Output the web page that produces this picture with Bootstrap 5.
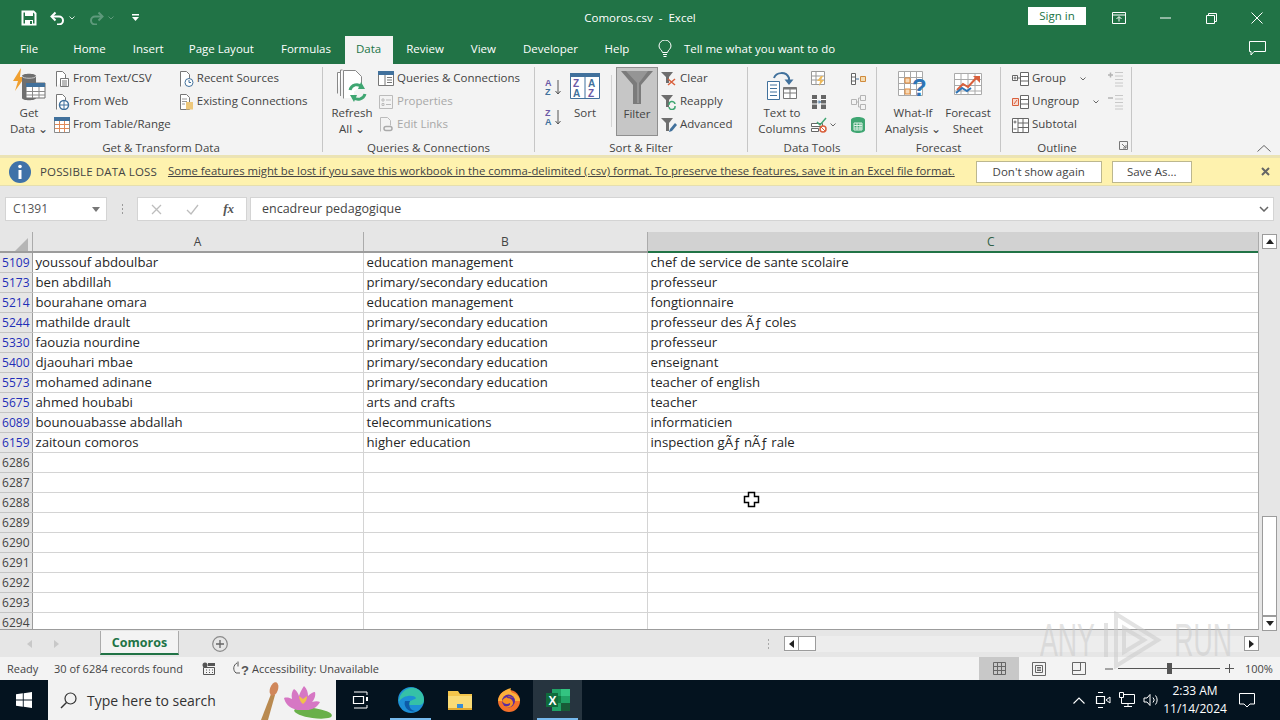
<!DOCTYPE html>
<html lang="en">
  <head>
    <meta charset="UTF-8" />
    <title>Comoros.csv - Excel</title>
    <link href="https://cdn.jsdelivr.net/npm/bootstrap@5.3.3/dist/css/bootstrap.min.css" rel="stylesheet" />
    <style>
      html, body { width: 1280px; height: 720px; overflow: hidden; }
      body { font-family: "Open Sans", "Liberation Sans", sans-serif; font-size: 11.5px; color: #444; background: #e6e6e6; position: relative; }
      svg { display: block; flex: none; }

      .title-bar { height: 36px; background: #217346; color: #fff; }
      .title-side { flex: 1 1 0; }
      .title-name { font-size: 11.5px; margin-bottom: 1px; }
      .qat-save { margin-left: 21px; }
      .qat-undo { margin-left: 13px; }
      .qat-caret { margin: 0 0 0 4px; }
      .qat-redo { margin-left: 14px; }
      .qat-more { margin-left: 18px; }
      .signin-btn { width: 58px; height: 18px; background: #fff; color: #217346; font-size: 11.5px; line-height: 18px; text-align: center; margin: 0 10px 4px 0; }
      .win-btn { width: 46px; }
      .tab-bar { height: 28px; background: #217346; color: #fff; }
      .tab-item { padding: 0 13.5px; line-height: 25px; white-space: nowrap; }
      .tab-file { padding: 0 21.5px 0 20px; }
      .tab-ins { padding-right: 11.5px; }
      .tab-on { background: #f3f3f3; color: #217346; padding: 0 11.5px; }
      .tab-dev { padding-right: 13px; }
      .tell-me { margin-left: 15px; gap: 12px; padding-bottom: 3px; }
      .comment-btn { margin: 0 14px 3px auto; align-self: center; }

      .ribbon { height: 91px; background: #f3f3f3; padding-top: 3px; }
      .rb-group { flex: none; position: relative; height: 85px; border-right: 1px solid #c6c6c6; }
      .rb-body { height: 73px; display: flex; }
      .rb-label { height: 16px; line-height: 15px; text-align: center; white-space: nowrap; }
      .rb-g1 { width: 323px; }
      .rb-g2 { width: 212px; }
      .rb-g3 { width: 213px; }
      .rb-g4 { width: 129px; }
      .rb-g5 { width: 124px; }
      .rb-g6 { width: 131px; }
      .rb-big { width: 42px; flex: none; display: flex; flex-direction: column; align-items: center; text-align: center; line-height: 15.5px; white-space: nowrap; }
      .rb-icon { height: 38px; display: flex; align-items: center; justify-content: center; }
      .rb-col { display: flex; flex-direction: column; flex: none; }
      .rb-item { height: 23px; display: flex; align-items: center; gap: 3px; white-space: nowrap; flex: none; }
      .rb-item > span { margin-top: -2px; }
      .rb-off { color: #a8a8a8; }
      .rb-c2 { margin-left: 7px; }
      .rb-refresh { margin-left: 8px; }
      .rb-qc { margin-left: 5px; }
      .rb-sort { margin-left: 10px; padding-top: 8px; }
      .rb-spacer { height: 7px; }
      .rb-sortbig { margin-left: 1px; }
      .rb-filter { width: 42px; height: 69px; background: #c6c6c6; border: 1px solid #8f8f8f; }
      .rb-thin { width: 1px; height: 52px; background: #d4d4d4; margin: 8px 4px 0 5px; }
      .rb-fcol { margin-left: 3px; }
      .rb-text2col { width: 50px; margin-left: 9px; }
      .rb-dt1 { margin-left: 4px; }
      .rb-dt2 { margin-left: 14px; }
      .rb-whatif { width: 56px; margin-left: 8px; }
      .rb-forecast { width: 50px; margin-left: 2px; }
      .rb-ol { margin-left: 11px; }
      .rb-ol2 { margin-left: 9px; }
      .ol-caret1 { margin-left: 11px; }
      .ol-caret2 { margin-left: 11px; }
      .rb-ol-label { padding-right: 18px; }
      .rb-launch { position: absolute; right: 3px; bottom: 2px; }
      .rb-fold { position: absolute; right: 9px; bottom: 3px; }
      .tiny-caret { width: 7px; }

      .msg-bar { height: 31px; background: #fef2ae; border-top: 3px solid #ebe3b4; border-bottom: 1px solid #e6dfae; color: #444; }
      .msg-icon { margin-left: 9px; }
      .msg-head { margin-left: 9px; white-space: nowrap; letter-spacing: 0.15px; }
      .msg-link { margin-left: 11px; color: #444; white-space: nowrap; text-decoration: underline; font-size: 11.32px; }
      .msg-btn { height: 22px; background: #fff; border: 1px solid #bcb78f; border-radius: 0; font-size: 11.5px; line-height: 20px; padding: 0; color: #444; }
      .msg-b1 { width: 126px; margin-left: 21px; }
      .msg-b2 { width: 80px; margin-left: 10px; }
      .msg-x { margin-left: auto; margin-right: 10px; }

      .fx-bar { height: 46px; background: #e6e6e6; padding: 11px 6px 0 5px; }
      .name-box { width: 102px; height: 24px; background: #fff; border: 1px solid #d4d4d4; padding: 0 6px 0 7px; font-size: 12px; color: #555; }
      .fx-grip { width: 30px; height: 24px; }
      .fx-btns { width: 110px; height: 24px; background: #fff; border: 1px solid #d4d4d4; margin-right: 3px; padding: 0 12px 0 13px; }
      .fx-label { font-family: "Liberation Serif", serif; font-style: italic; font-weight: 700; font-size: 13px; color: #555; }
      .fx-input { flex: 1; height: 24px; background: #fff; border: 1px solid #d4d4d4; padding: 0 4px 0 11px; font-size: 12.5px; color: #444; }

      .sheet-wrap { height: 399px; }
      .sheet-main { width: 1259px; height: 398px; overflow: hidden; background: #fff; border-bottom: 1px solid #9c9c9c; border-right: 1px solid #ababab; position: relative; }
      .table.sheet-grid { table-layout: fixed; width: 1258px; font-size: 13.2px; color: #262626; }
      .table.sheet-grid th, .table.sheet-grid td { height: 20px; padding: 0 2px 0 3px; line-height: 19px; border: 0; border-right: 1px solid #d4d4d4; border-bottom: 1px solid #d4d4d4; white-space: nowrap; overflow: hidden; background: #fff; color: #262626; box-shadow: none; font-weight: 400; }
      .table.sheet-grid thead th { background: #e6e6e6; text-align: center; font-size: 12px; color: #444; border-right-color: #ababab; border-bottom: 2px solid #9c9c9c; padding: 0; }
      .table.sheet-grid thead th.col-on { background: #d2d2d2; border-bottom-color: #217346; color: #2f5f46; padding-left: 76px; border-right: 0; }
      .table.sheet-grid td.row-num { background: #e6e6e6; border-right-color: #9c9c9c; border-bottom-color: #c4c4c4; text-align: right; padding: 0 2px 0 0; color: #444; font-size: 12px; }
      .table.sheet-grid td.row-hit { color: #1f2fb8; }
      .table.sheet-grid td.cell-last { border-right: 0; }
      .corner-mark { margin-left: 15px; }
      .vscroll { width: 21px; padding: 2px 3px 0 3px; background: #e6e6e6; }
      .sb-arrow { width: 15px; height: 15px; background: #fff; border: 1px solid #9c9c9c; display: flex; align-items: center; justify-content: center; flex: none; }
      .sb-thumb-v { width: 15px; height: 100px; background: #fff; border: 1px solid #9c9c9c; margin-top: auto; }

      .tabs-row { height: 26px; background: #e6e6e6; }
      .sheet-nav { width: 100px; padding-left: 27px; gap: 22px; }
      .sheet-tab { width: 79px; height: 24px; background: #f3f3f3; border: 1px solid #ababab; border-top: 0; border-bottom: 2px solid #217346; color: #217346; font-weight: 700; font-size: 12.5px; text-align: center; line-height: 24px; }
      .add-sheet { margin-left: 33px; }
      .h-grip { margin-left: auto; margin-right: 14px; }
      .hscroll { width: 475px; height: 16px; background: #ededed; margin-right: 21px; }
      .sb-thumb-h { width: 17px; height: 15px; background: #fff; border: 1px solid #9c9c9c; border-left: 0; }

      .status-bar { height: 23px; background: #f3f3f3; color: #444; font-size: 11px; }
      .status-bar > span { margin-top: 2px; }
      .st-ready { margin-left: 7px; width: 47px; }
      .st-count { width: 148px; white-space: nowrap; }
      .st-macro { margin-right: 16px; }
      .view-btn { width: 40px; height: 23px; display: flex; align-items: center; justify-content: center; }
      .view-on { background: #c8c8c8; }
      .view-group { margin-left: auto; }
      .zoom-ctl { margin-left: 6px; gap: 5px; }
      .zoom-track { width: 102px; height: 1px; background: #555; position: relative; }
      .zoom-knob { position: absolute; left: 49px; top: -5px; width: 5px; height: 11px; background: #555; }
      .zoom-pct { width: 46px; padding-left: 11px; }

      .task-bar { height: 40px; background: #04131f; color: #fff; }
      .start-btn { width: 48px; height: 40px; }
      .search-box { width: 288px; height: 40px; background: #f2f2f2; color: #333; font-size: 14px; padding-left: 12px; gap: 10px; position: relative; }
      .search-art { position: absolute; right: 3px; bottom: 0; }
      .task-app { width: 49px; height: 40px; position: relative; display: flex; align-items: center; justify-content: center; }
      .task-first { width: 50px; }
      .task-run::after { content: ""; position: absolute; left: 4px; right: 4px; bottom: 0; height: 2px; background: #76b9ed; }
      .task-active { background: #26343f; }
      .tray { margin-left: auto; gap: 8px; }
      .tray-meet { margin-left: 2px; }
      .tray-clock { width: 58px; text-align: center; font-size: 12px; line-height: 18px; margin-left: -1px; white-space: nowrap; display: flex; flex-direction: column; align-items: center; }
      .tray-note { margin: 0 25px 0 15px; }

      .wm-mark { position: absolute; left: 1040px; top: 611px; width: 192px; height: 58px; color: rgba(200, 200, 200, 0.5); font-family: "Liberation Sans", sans-serif; font-size: 46px; line-height: 58px; pointer-events: none; }
      .wm-any { display: inline-block; transform: scaleX(0.58); transform-origin: left center; width: 56px; }
      .wm-run { display: inline-block; transform: scaleX(0.58); transform-origin: right center; width: 62px; text-align: right; direction: rtl; }
      .xl-cursor { position: absolute; left: 743px; top: 491px; pointer-events: none; }
    </style>
  </head>
  <body>
    <!-- Title bar -->
    <div class="title-bar d-flex align-items-center">
      <div class="title-side d-flex align-items-center">
        <svg class="qat-save" width="16" height="16" viewBox="0 0 16 16"><path d="M1.5 1.5h11l2 2v11h-13z" fill="none" stroke="#fff" stroke-width="2"/><path d="M4 2h8v4H4z" fill="#fff"/><path d="M4 10h8v5H4z" fill="#fff"/><path d="M9 11h2v3H9z" fill="#217346"/></svg>
        <svg class="qat-undo" width="15" height="14" viewBox="0 0 15 14"><path d="M5.5 1.5 1.5 5.500l4 4" fill="none" stroke="#fff" stroke-width="2"/><path d="M2 5.500h7a4 4 0 0 1 0 8H7" fill="none" stroke="#fff" stroke-width="2"/></svg>
        <svg class="qat-caret" width="6" height="4" viewBox="0 0 6 4"><path d="M.5.5 3 3 5.500.5" fill="none" stroke="#d8e8df"/></svg>
        <svg class="qat-redo" width="15" height="14" viewBox="0 0 15 14"><path d="M9.500 1.500l4 4-4 4" fill="none" stroke="#5f9a7c" stroke-width="2"/><path d="M13 5.500H6a4 4 0 0 0 0 8h2" fill="none" stroke="#5f9a7c" stroke-width="2"/></svg>
        <svg class="qat-caret" width="6" height="4" viewBox="0 0 6 4"><path d="M.5.5 3 3 5.500.5" fill="none" stroke="#5f9a7c"/></svg>
        <svg class="qat-more" width="7" height="8" viewBox="0 0 7 8"><path d="M0 0h7v1.500H0z M0 3h7L3.500 7z" fill="#fff"/></svg>
      </div>
      <div class="title-name">Comoros.csv&nbsp; -&nbsp; Excel</div>
      <div class="title-side d-flex align-items-center justify-content-end">
        <div class="signin-btn">Sign in</div>
        <div class="win-btn d-flex justify-content-center"><svg width="14" height="12" viewBox="0 0 14 12"><path d="M.5.500h13v11H.5z M.5 3h13" fill="none" stroke="#fff"/><path d="M7 9.500V5M4.500 7 7 4.500 9.500 7" fill="none" stroke="#fff"/></svg></div>
        <div class="win-btn d-flex justify-content-center"><svg width="11" height="2" viewBox="0 0 11 2"><path d="M0 1h11" stroke="#fff"/></svg></div>
        <div class="win-btn d-flex justify-content-center"><svg width="11" height="11" viewBox="0 0 11 11"><path d="M.5 2.500h8v8h-8z M2.500 2.500v-2h8v8h-2" fill="none" stroke="#fff"/></svg></div>
        <div class="win-btn d-flex justify-content-center"><svg width="12" height="12" viewBox="0 0 12 12"><path d="M.5.500l11 11M11.500.500l-11 11" stroke="#fff"/></svg></div>
      </div>
    </div>

    <!-- Ribbon tabs -->
    <div class="tab-bar d-flex">
      <div class="tab-item tab-file">File</div>
      <div class="tab-item">Home</div>
      <div class="tab-item tab-ins">Insert</div>
      <div class="tab-item">Page Layout</div>
      <div class="tab-item">Formulas</div>
      <div class="tab-item tab-on">Data</div>
      <div class="tab-item">Review</div>
      <div class="tab-item">View</div>
      <div class="tab-item tab-dev">Developer</div>
      <div class="tab-item">Help</div>
      <div class="tell-me d-flex align-items-center">
        <svg width="14" height="18" viewBox="0 0 14 18"><path d="M4.500 12.500C4 10 1 9 1 6a6 6 0 0 1 12 0c0 3-3 4-3.500 6.500z M5 14.500h4M5.500 16.500h3" fill="none" stroke="#fff"/></svg>
        <span>Tell me what you want to do</span>
      </div>
      <svg class="comment-btn" width="17" height="15" viewBox="0 0 17 15"><path d="M.5.500h16v10H5l-3 3.500v-3.500H.5z" fill="none" stroke="#fff"/></svg>
    </div>

    <!-- Ribbon -->
    <div class="ribbon d-flex">
      <div class="rb-group rb-g1">
        <div class="rb-body">
          <div class="rb-big ms-2">
            <div class="rb-icon">
              <svg width="34" height="36" viewBox="0 0 34 36"><path d="M9 0 1 13h5L3 23l10-14H8z" fill="#f0a030"/><path d="M10 8c0-3 14-3 14 0v22c0 3-14 3-14 0z" fill="#6f6f6f"/><path d="M10 8c0 3 14 3 14 0" fill="none" stroke="#c8c8c8"/><path d="M14 15h19v15H14z" fill="#fff" stroke="#6f6f6f"/><path d="M14 15h19v4H14z" fill="#41719c"/><path d="M14 23.500h19M14 27h19M20.500 19v11M27 19v11" stroke="#8a8a8a"/></svg>
            </div>
            <div>Get</div>
            <div>Data <span class="tiny-caret">⌄</span></div>
          </div>
          <div class="rb-col ms-1">
            <div class="rb-item">
              <svg width="16" height="16" viewBox="0 0 16 16"><path d="M2.500 15.500v-15h6l3 3v4" fill="#fff" stroke="#777"/><path d="M6.500 7.500h8v8h-8z M8 10h5M8 12h5M8 14h5" fill="#fff" stroke="#777"/></svg>
              <span>From Text/CSV</span>
            </div>
            <div class="rb-item">
              <svg width="16" height="16" viewBox="0 0 16 16"><path d="M2.500 15.500v-15h6l3 3v5" fill="#fff" stroke="#777"/><circle cx="10" cy="11" r="4.500" fill="#fff" stroke="#41719c" stroke-width="1.500"/><path d="M5.500 11h9M10 6.500v9" stroke="#41719c"/></svg>
              <span>From Web</span>
            </div>
            <div class="rb-item">
              <svg width="16" height="16" viewBox="0 0 16 16"><path d="M.500.500h15v15H.500z" fill="#fff" stroke="#8a8a8a"/><path d="M0 0h16v4H0z" fill="#41719c"/><path d="M1 7.500h14M1 11.500h14M5.500 4v11M10.500 4v11" stroke="#e08a5a"/></svg>
              <span>From Table/Range</span>
            </div>
          </div>
          <div class="rb-col rb-c2">
            <div class="rb-item">
              <svg width="16" height="16" viewBox="0 0 16 16"><path d="M2.500 15.500v-15h6l3 3v4" fill="#fff" stroke="#777"/><circle cx="11" cy="11.500" r="4" fill="#fff" stroke="#41719c"/><path d="M11 9v2.500h2" fill="none" stroke="#41719c"/></svg>
              <span>Recent Sources</span>
            </div>
            <div class="rb-item">
              <svg width="16" height="16" viewBox="0 0 16 16"><path d="M2.500 15.500v-15h6l3 3v12z" fill="#fff" stroke="#777"/><path d="M4 5h5M4 7.500h5M4 10h3" stroke="#999"/><path d="M8 8h7v7.500H8z" fill="#edc77a"/></svg>
              <span>Existing Connections</span>
            </div>
          </div>
        </div>
        <div class="rb-label">Get &amp; Transform Data</div>
      </div>

      <div class="rb-group rb-g2">
        <div class="rb-body">
          <div class="rb-big rb-refresh">
            <div class="rb-icon">
              <svg width="32" height="34" viewBox="0 0 32 34"><path d="M1.500 24.500V3.500h3M4.500 27V1h2M7.500 29.500V1.500h12l6 6v10" fill="#fff" stroke="#888"/><path d="M8 29h10V9H8z" fill="#fff"/><path d="M14 21a7 7 0 0 1 12-3M29 25a7 7 0 0 1-12 3" fill="none" stroke="#3fa672" stroke-width="3"/><path d="M25 13l4 7-7 0z M18 33l-4-7 7 0z" fill="#3fa672"/></svg>
            </div>
            <div>Refresh</div>
            <div>All <span class="tiny-caret">⌄</span></div>
          </div>
          <div class="rb-col rb-qc">
            <div class="rb-item">
              <svg width="16" height="16" viewBox="0 0 16 16"><path d="M.500.500h15v14H.500z" fill="#fff" stroke="#777"/><path d="M0 0h16v4H0z" fill="#41719c"/><path d="M9 6.500h5M9 9h5M9 11.500h5M7 4v10" stroke="#777"/></svg>
              <span>Queries &amp; Connections</span>
            </div>
            <div class="rb-item rb-off">
              <svg width="16" height="16" viewBox="0 0 16 16"><path d="M1.500 1.500h13v13h-13z" fill="#f3f3f3" stroke="#bbb"/><path d="M4 5h2v2H4z M4 9.500h2v2H4z M8 6h5M8 10.500h5" fill="none" stroke="#bbb"/></svg>
              <span>Properties</span>
            </div>
            <div class="rb-item rb-off">
              <svg width="16" height="16" viewBox="0 0 16 16"><path d="M2.500 14.500v-14h7l3 3v5" fill="none" stroke="#bbb"/><path d="M6 11.500a2 2 0 0 1 2-2h2M10 13.500H8a2 2 0 0 1-2-2M10 9.500h2a2 2 0 0 1 0 4h-2" fill="none" stroke="#aaa" stroke-width="1.500"/></svg>
              <span>Edit Links</span>
            </div>
          </div>
        </div>
        <div class="rb-label">Queries &amp; Connections</div>
      </div>

      <div class="rb-group rb-g3">
        <div class="rb-body">
          <div class="rb-col rb-sort">
            <div class="rb-item">
              <svg width="18" height="18" viewBox="0 0 18 18"><text x="0" y="8" font-size="9" font-weight="700" fill="#6b5aa6" font-family="Liberation Sans">A</text><text x="0" y="17" font-size="9" font-weight="700" fill="#41719c" font-family="Liberation Sans">Z</text><path d="M13 2v14M10.500 13 13 16l2.500-3" fill="none" stroke="#555"/></svg>
            </div>
            <div class="rb-spacer"></div>
            <div class="rb-item">
              <svg width="18" height="18" viewBox="0 0 18 18"><text x="0" y="8" font-size="9" font-weight="700" fill="#6b5aa6" font-family="Liberation Sans">Z</text><text x="0" y="17" font-size="9" font-weight="700" fill="#41719c" font-family="Liberation Sans">A</text><path d="M13 2v14M10.500 13 13 16l2.500-3" fill="none" stroke="#555"/></svg>
            </div>
          </div>
          <div class="rb-big rb-sortbig">
            <div class="rb-icon">
              <svg width="30" height="26" viewBox="0 0 30 26"><path d="M.500 3.500h29v22H.500zM15 3.500v22" fill="#fff" stroke="#41719c"/><path d="M0 0h30v4H0z" fill="#41719c"/><text x="3" y="14" font-size="10" font-weight="700" fill="#6b5aa6" font-family="Liberation Sans">Z</text><text x="18" y="14" font-size="10" font-weight="700" fill="#41719c" font-family="Liberation Sans">A</text><text x="3" y="24" font-size="10" font-weight="700" fill="#41719c" font-family="Liberation Sans">A</text><text x="18" y="24" font-size="10" font-weight="700" fill="#6b5aa6" font-family="Liberation Sans">Z</text></svg>
            </div>
            <div>Sort</div>
          </div>
          <div class="rb-thin"></div>
          <div class="rb-big rb-filter">
            <div class="rb-icon">
              <svg width="32" height="34" viewBox="0 0 32 34"><path d="M0 1h32L20 15v19h-8V15z" fill="#7b7b7b"/><path d="M5 1h22L18 13v20h-2V13z" fill="#959595"/></svg>
            </div>
            <div>Filter</div>
          </div>
          <div class="rb-col rb-fcol">
            <div class="rb-item">
              <svg width="16" height="16" viewBox="0 0 16 16"><path d="M0 1h12L8 6v6H5V6z" fill="#6e6e6e"/><path d="M7 8l7 6M14 8l-7 6" stroke="#d9603c" stroke-width="1.500"/></svg>
              <span>Clear</span>
            </div>
            <div class="rb-item">
              <svg width="16" height="16" viewBox="0 0 16 16"><path d="M0 1h12L8 6v7H5V6z" fill="#6e6e6e"/><path d="M8 11a3 3 0 0 1 6-1M14 12a3 3 0 0 1-6 1" fill="none" stroke="#3fa672" stroke-width="1.500"/></svg>
              <span>Reapply</span>
            </div>
            <div class="rb-item">
              <svg width="16" height="16" viewBox="0 0 16 16"><path d="M0 1h12L8 6v8H5V6z" fill="#6e6e6e"/><path d="M14 6 9 12l-1 3 3-1 5-6z" fill="#41719c"/></svg>
              <span>Advanced</span>
            </div>
          </div>
        </div>
        <div class="rb-label">Sort &amp; Filter</div>
      </div>

      <div class="rb-group rb-g4">
        <div class="rb-body">
          <div class="rb-big rb-text2col">
            <div class="rb-icon">
              <svg width="32" height="30" viewBox="0 0 32 30"><path d="M1.500 10.500h12v18h-12z M4 14h7M4 17.500h7M4 21h7M4 24.500h7" fill="#fff" stroke="#41719c"/><path d="M17.500 16.500h13v11h-13zM24 16.500v11M17.500 22h13" fill="#fff" stroke="#777"/><path d="M17.500 16.500h13v2h-13z" fill="#777"/><path d="M8 7C10 1 20 0 23 7l0 3" fill="none" stroke="#41719c" stroke-width="2"/><path d="M18.500 8.500h9L23 14z" fill="#41719c"/></svg>
            </div>
            <div>Text to</div>
            <div>Columns</div>
          </div>
          <div class="rb-col rb-dt1">
            <div class="rb-item"><svg width="16" height="16" viewBox="0 0 16 16"><path d="M.500.500h13v13H.500zM1 5h12M1 9h12M5 1v12" fill="#fff" stroke="#999"/><path d="M10 5 6 10h3l-1 5 5-6h-3l2-4z" fill="#edb95a"/></svg></div>
            <div class="rb-item"><svg width="16" height="16" viewBox="0 0 16 16"><path d="M1 1h5v14H1z M10 1h5v14h-5z" fill="#666"/><path d="M1 5.500h5M1 10h5M10 5.500h5M10 10h5" stroke="#fff"/><path d="M6.500 8h3M8 6.500 9.500 8 8 9.500" fill="none" stroke="#41719c"/></svg></div>
            <div class="rb-item"><svg width="16" height="16" viewBox="0 0 16 16"><path d="M.500 6.500h11v3H.500z M.500 11.500h7v3H.500z" fill="#fff" stroke="#666"/><path d="M6 5 9 8l6-7" fill="none" stroke="#3fa672" stroke-width="1.500"/><circle cx="12" cy="12" r="3" fill="#fff" stroke="#d9603c" stroke-width="1.500"/><path d="M10 10l4 4" stroke="#d9603c"/></svg><svg width="6" height="4" viewBox="0 0 6 4"><path d="M.500.500 3 3 5.500.500" fill="none" stroke="#666"/></svg></div>
          </div>
          <div class="rb-col rb-dt2">
            <div class="rb-item"><svg width="16" height="16" viewBox="0 0 16 16"><path d="M1.500 2.500h4v11h-4zM1.500 6h4M1.500 10h4" fill="#fff" stroke="#666"/><path d="M6 8h3" stroke="#41719c"/><path d="M10.500 5.500h5v5h-5z" fill="#f3dcb2" stroke="#d08a3c"/></svg></div>
            <div class="rb-item"><svg width="16" height="16" viewBox="0 0 16 16"><path d="M1.500 5.500h5v5h-5zM10.500 1.500h5v5h-5zM10.500 10.500h5v5h-5zM6.500 8h2v-4h2M8.500 8v5h2" fill="none" stroke="#b4b4b4"/></svg></div>
            <div class="rb-item"><svg width="16" height="16" viewBox="0 0 16 16"><path d="M1 3c0-4 14-4 14 0v10c0 4-14 4-14 0z" fill="#3fa672"/><path d="M4 6h8v7H4zM4 8.500h8M4 11h8M7 6v7M10 6v7" fill="none" stroke="#dff1e6"/></svg></div>
          </div>
        </div>
        <div class="rb-label">Data Tools</div>
      </div>

      <div class="rb-group rb-g5">
        <div class="rb-body">
          <div class="rb-big rb-whatif">
            <div class="rb-icon">
              <svg width="30" height="32" viewBox="0 0 30 32"><path d="M.500 1.500h24v24H.500zM.500 7.500h24M.500 13.500h24M.500 19.500h24M6.500 1.500v24M12.500 1.500v24M18.500 1.500v24" fill="#fff" stroke="#a8a8a8"/><path d="M7 8h5v5H7zM7 19h5v5H7z" fill="#f7d9b6" stroke="#e08a3c"/><text x="14" y="26" font-size="24" font-weight="700" fill="#2e74b5" font-family="Liberation Sans">?</text></svg>
            </div>
            <div>What-If</div>
            <div>Analysis <span class="tiny-caret">⌄</span></div>
          </div>
          <div class="rb-big rb-forecast">
            <div class="rb-icon">
              <svg width="28" height="26" viewBox="0 0 28 26"><path d="M.500.500h27v21H.500zM.500 6.500h27M.500 12.500h27M.500 18h27M7 .500v21M14 .500v21M21 .500v21" fill="#fff" stroke="#aaa"/><path d="M3 17l6-6 5 3 9-10" fill="none" stroke="#d9603c" stroke-width="2"/><path d="M19 3h7v7z" fill="#d9603c"/><path d="M2 20l6-5 5 3 4-3" fill="none" stroke="#2e74b5" stroke-width="2"/></svg>
            </div>
            <div>Forecast</div>
            <div>Sheet</div>
          </div>
        </div>
        <div class="rb-label">Forecast</div>
      </div>

      <div class="rb-group rb-g6">
        <div class="rb-body">
          <div class="rb-col rb-ol">
            <div class="rb-item"><svg width="17" height="16" viewBox="0 0 17 16"><path d="M.500 4.500h5v5h-5zM1.500 7h3M3 5.500v3" fill="#fff" stroke="#666"/><path d="M6 7h2" stroke="#666"/><path d="M8.500 1.500h8v13h-8zM8.500 5.500h8M8.500 10h8" fill="#fff" stroke="#666"/></svg><span>Group</span><svg class="ol-caret1" width="6" height="4" viewBox="0 0 6 4"><path d="M.500.500 3 3 5.500.500" fill="none" stroke="#666"/></svg></div>
            <div class="rb-item"><svg width="17" height="16" viewBox="0 0 17 16"><path d="M.500 4.500h6v7h-6z" fill="#f7d9d0" stroke="#d9603c"/><path d="M2 10l3-4" stroke="#d9603c"/><path d="M8.500 1.500h8v13h-8zM8.500 5.500h8M8.500 10h8" fill="#fff" stroke="#666"/></svg><span>Ungroup</span><svg class="ol-caret2" width="6" height="4" viewBox="0 0 6 4"><path d="M.500.500 3 3 5.500.500" fill="none" stroke="#666"/></svg></div>
            <div class="rb-item"><svg width="17" height="16" viewBox="0 0 17 16"><path d="M.500 1.500h16v14H.500zM6 1.500v14M11 1.500v14M6 6h10.500M6 10.500h10.500" fill="#fff" stroke="#666"/><path d="M1.500 5h3M3 3.500v3M1.500 12h3" stroke="#666"/></svg><span>Subtotal</span></div>
          </div>
          <div class="rb-col rb-ol2">
            <div class="rb-item"><svg width="16" height="16" viewBox="0 0 16 16"><path d="M0 4h5M2.500 1.500v5" stroke="#b4b4b4" stroke-width="1.500"/><path d="M7 1.500h8M7 5h8M7 8.500h8M7 12h8M7 15h8" stroke="#c8c8c8"/></svg></div>
            <div class="rb-item"><svg width="16" height="16" viewBox="0 0 16 16"><path d="M0 4h5" stroke="#b4b4b4" stroke-width="1.500"/><path d="M7 1.500h8M7 5h8M7 8.500h8M7 12h8M7 15h8" stroke="#c8c8c8"/></svg></div>
          </div>
        </div>
        <div class="rb-label rb-ol-label">Outline</div>
        <svg class="rb-launch" width="9" height="9" viewBox="0 0 9 9"><path d="M.500.500h8v8h-8zM3 3l4 4M7 4v3H4" fill="none" stroke="#777"/></svg>
      </div>
      <div class="flex-grow-1 position-relative">
        <svg class="rb-fold" width="14" height="7" viewBox="0 0 14 7"><path d="M.500 6.500 7 .500l6.500 6" fill="none" stroke="#666"/></svg>
      </div>
    </div>

    <!-- Message bar -->
    <div class="msg-bar d-flex align-items-center">
      <svg class="msg-icon" width="22" height="22" viewBox="0 0 22 22"><circle cx="11" cy="11" r="11" fill="#3f72a8"/><path d="M9.500 9h3v9h-3z" fill="#fff"/><circle cx="11" cy="5.500" r="1.800" fill="#fff"/></svg>
      <span class="msg-head">POSSIBLE DATA LOSS</span>
      <span class="msg-link">Some features might be lost if you save this workbook in the comma-delimited (.csv) format. To preserve these features, save it in an Excel file format.</span>
      <button type="button" class="btn msg-btn msg-b1">Don't show again</button>
      <button type="button" class="btn msg-btn msg-b2">Save As...</button>
      <svg class="msg-x" width="9" height="9" viewBox="0 0 9 9"><path d="M1 1l7 7M8 1 1 8" stroke="#666" stroke-width="2"/></svg>
    </div>

    <!-- Formula bar -->
    <div class="fx-bar d-flex">
      <div class="name-box d-flex align-items-center justify-content-between">
        <span>C1391</span>
        <svg width="8" height="5" viewBox="0 0 8 5"><path d="M0 0h8L4 5z" fill="#777"/></svg>
      </div>
      <div class="fx-grip d-flex align-items-center justify-content-center">
        <svg width="3" height="12" viewBox="0 0 3 12"><path d="M1 1h1v2H1zM1 5h1v2H1zM1 9h1v2H1z" fill="#9a9a9a"/></svg>
      </div>
      <div class="fx-btns d-flex align-items-center justify-content-between">
        <svg width="11" height="11" viewBox="0 0 11 11"><path d="M1 1l9 9M10 1 1 10" stroke="#bdbdbd" stroke-width="1.300"/></svg>
        <svg class="mx-auto" width="13" height="11" viewBox="0 0 13 11"><path d="M1 6l4 4 7-9" fill="none" stroke="#bdbdbd" stroke-width="1.300"/></svg>
        <span class="fx-label">fx</span>
      </div>
      <div class="fx-input d-flex align-items-center justify-content-between">
        <span>encadreur pedagogique</span>
        <svg width="10" height="6" viewBox="0 0 10 6"><path d="M1 1l4 4 4-4" fill="none" stroke="#666" stroke-width="1.500"/></svg>
      </div>
    </div>

    <!-- Worksheet -->
    <div class="sheet-wrap d-flex">
      <div class="sheet-main">
        <table class="table mb-0 sheet-grid">
          <colgroup>
            <col style="width: 32px" /><col style="width: 331px" /><col style="width: 284px" /><col style="width: 611px" />
          </colgroup>
          <thead>
            <tr>
              <th><svg class="corner-mark" width="13" height="13" viewBox="0 0 13 13"><path d="M13 0v13H0z" fill="#b5b5b5"/></svg></th>
              <th>A</th>
              <th>B</th>
              <th class="col-on">C</th>
            </tr>
          </thead>
          <tbody id="sheetBody"></tbody>
        </table>
      </div>
      <div class="vscroll d-flex flex-column">
        <div class="sb-arrow"><svg width="8" height="5" viewBox="0 0 8 5"><path d="M4 0l4 5H0z" fill="#222"/></svg></div>
        <div class="sb-thumb-v"></div>
        <div class="sb-arrow"><svg width="8" height="5" viewBox="0 0 8 5"><path d="M0 0h8L4 5z" fill="#222"/></svg></div>
      </div>
    </div>

    <!-- Sheet tabs -->
    <div class="tabs-row d-flex align-items-start">
      <div class="sheet-nav d-flex align-items-center h-100">
        <svg width="5" height="8" viewBox="0 0 5 8"><path d="M5 0v8L0 4z" fill="#c8c8c8"/></svg>
        <svg width="5" height="8" viewBox="0 0 5 8"><path d="M0 0v8l5-4z" fill="#c8c8c8"/></svg>
      </div>
      <div class="sheet-tab">Comoros</div>
      <svg class="add-sheet align-self-center" width="16" height="16" viewBox="0 0 16 16"><circle cx="8" cy="8" r="7.300" fill="none" stroke="#8a8a8a" stroke-width="1.200"/><path d="M4 8h8M8 4v8" stroke="#666" stroke-width="1.300"/></svg>
      <svg class="h-grip align-self-center" width="3" height="12" viewBox="0 0 3 12"><path d="M1 1h1v2H1zM1 5h1v2H1zM1 9h1v2H1z" fill="#a8a8a8"/></svg>
      <div class="hscroll d-flex align-self-center">
        <div class="sb-arrow"><svg width="5" height="8" viewBox="0 0 5 8"><path d="M5 0v8L0 4z" fill="#222"/></svg></div>
        <div class="sb-thumb-h"></div>
        <div class="sb-arrow ms-auto"><svg width="5" height="8" viewBox="0 0 5 8"><path d="M0 0v8l5-4z" fill="#222"/></svg></div>
      </div>
    </div>

    <!-- Status bar -->
    <div class="status-bar d-flex align-items-center">
      <span class="st-ready">Ready</span>
      <span class="st-count">30 of 6284 records found</span>
      <svg class="st-macro" width="14" height="13" viewBox="0 0 14 13"><circle cx="3" cy="3" r="2.500" fill="#555"/><path d="M6 1h7v3H6z" fill="#555"/><path d="M1.500 5.500h11v7h-11zM4 8h1M7 8h1M10 8h1M4 10.500h1M7 10.500h1M10 10.500h1" fill="none" stroke="#555"/></svg>
      <svg width="20" height="16" viewBox="0 0 20 16"><path d="M5 2A6 6 0 0 0 4 12h4" fill="none" stroke="#555"/><path d="M6 .500v5" stroke="#555"/><text x="9" y="14" font-size="13" font-weight="700" fill="#555" font-family="Liberation Sans">?</text></svg>
      <span>Accessibility: Unavailable</span>
      <div class="view-group d-flex align-items-center">
        <div class="view-btn view-on"><svg width="13" height="13" viewBox="0 0 13 13"><path d="M.500.500h12v12H.500zM.500 4.500h12M.500 8.500h12M4.500.500v12M8.500.500v12" fill="none" stroke="#666"/></svg></div>
        <div class="view-btn"><svg width="14" height="14" viewBox="0 0 14 14"><path d="M.500.500h13v13H.500zM3.500 3.500h7v7h-7zM5 5.500h4M5 7h4M5 8.500h4" fill="none" stroke="#666"/></svg></div>
        <div class="view-btn"><svg width="14" height="13" viewBox="0 0 14 13"><path d="M.500.500h13v12H.500zM.500 8.500h8V.500" fill="none" stroke="#666"/></svg></div>
      </div>
      <div class="zoom-ctl d-flex align-items-center">
        <svg width="8" height="2" viewBox="0 0 8 2"><path d="M0 1h8" stroke="#555"/></svg>
        <div class="zoom-track"><div class="zoom-knob"></div></div>
        <svg width="9" height="9" viewBox="0 0 9 9"><path d="M0 4.500h9M4.500 0v9" stroke="#555"/></svg>
      </div>
      <span class="zoom-pct">100%</span>
    </div>

    <!-- Taskbar -->
    <div class="task-bar d-flex align-items-center">
      <div class="start-btn d-flex align-items-center justify-content-center">
        <svg width="16" height="16" viewBox="0 0 16 16"><path d="M0 2.300 6.800 1.300v6.200H0zM7.700 1.200 16 0v7.500H7.700zM0 8.500h6.800v6.200L0 13.700zM7.700 8.500H16V16l-8.300-1.200z" fill="#fff"/></svg>
      </div>
      <div class="search-box d-flex align-items-center">
        <svg width="17" height="17" viewBox="0 0 17 17"><circle cx="10.500" cy="6.500" r="5.500" fill="none" stroke="#333" stroke-width="1.200"/><path d="M6.500 10.500 1 16" stroke="#333" stroke-width="1.500"/></svg>
        <span>Type here to search</span>
        <svg class="search-art" width="74" height="38" viewBox="0 0 74 38"><path d="M2 38 12 12l4 1-7 25z" fill="#b98a50"/><ellipse cx="15" cy="7" rx="4" ry="7" transform="rotate(18 15 7)" fill="#d0875a"/><ellipse cx="54" cy="31" rx="19" ry="5" transform="rotate(8 54 31)" fill="#69b04a"/><path d="M38 28c-8-2-12-7-13-12 3-1 6 0 8 1-1-4 0-8 2-10 3 2 4 4 5 7 1-4 3-7 5-10 3 3 4 6 4 10 2-2 5-4 7-4 1 4-1 8-3 10 3-1 6-1 8 0-3 6-9 8-13 8z" fill="#d677c4"/><path d="M44 22c-3-2-4-6-4-8l4 3 4-3c0 3-1 6-4 8z" fill="#f1c24a"/></svg>
      </div>
      <div class="task-app task-first">
        <svg width="20" height="18" viewBox="0 0 20 18"><path d="M3 1h13M3 17h13M2.500 5.500h10v7h-10z" fill="none" stroke="#fff" stroke-width="1.200"/><path d="M16 1v3M16 14v3" stroke="#fff"/><path d="M15 6h2v4h-2z" fill="#fff"/></svg>
      </div>
      <div class="task-app task-run">
        <svg width="26" height="26" viewBox="0 0 26 26"><circle cx="13" cy="13" r="13" fill="#1d8fd6"/><path d="M1 15C1 5 10 0 16 1c6 1 10 6 10 12 0 3-2 5-5 5H10c0-5 7-5 8-7-2-4-14-3-17 4z" fill="#35c1a7"/><path d="M7 14c-2 6 4 12 11 10-6 0-8-6-6-10z" fill="#0d5ba8"/></svg>
      </div>
      <div class="task-app">
        <svg width="24" height="20" viewBox="0 0 24 20"><path d="M0 1h10l2 3h12v16H0z" fill="#f4c54b"/><path d="M0 6h24v14H0z" fill="#fadb76"/><path d="M9 14h6v4H9z" fill="#3a8ed6"/><path d="M0 18h24v2H0z" fill="#e3a92d"/></svg>
      </div>
      <div class="task-app">
        <svg width="24" height="24" viewBox="0 0 24 24"><circle cx="12" cy="13" r="11" fill="#f4702a"/><path d="M1 13C2 5 8 2 14 0c-1 3 0 4 2 5 4 1 7 4 7 8z" fill="#fbb03b"/><circle cx="11.500" cy="13" r="6.500" fill="#5a2ca0"/><path d="M5 13c2-4 7-5 11-3-2-2-6-2-6 0 3 0 6 2 6 5 0 4-6 6-9 3 2 1 7 0 6-3-3 2-6 1-8-2z" fill="#f79322"/></svg>
      </div>
      <div class="task-app task-run task-active">
        <svg width="24" height="22" viewBox="0 0 24 22"><path d="M6 0h18v22H6z" fill="#21a366"/><path d="M15 0h9v7h-9z" fill="#33c481"/><path d="M6 7h9v7H6z" fill="#107c41"/><path d="M15 14h9v8h-9z" fill="#185c37"/><path d="M0 4h12v14H0z" fill="#0f6b3c"/><text x="2.500" y="15.500" font-size="12" font-weight="700" fill="#fff" font-family="Liberation Sans">X</text></svg>
      </div>
      <div class="tray d-flex align-items-center">
        <svg width="12" height="7" viewBox="0 0 12 7"><path d="M.500 6.500 6 1l5.500 5.500" fill="none" stroke="#fff" stroke-width="1.100"/></svg>
        <svg class="tray-meet" width="16" height="18" viewBox="0 0 16 18"><path d="M3 1.500h5M3 16.500h5" stroke="#fff"/><path d="M1.500 5.500h8v7h-8z" fill="none" stroke="#fff" stroke-width="1.200"/><path d="M11 9l4-3v6z" fill="none" stroke="#fff"/></svg>
        <svg width="16" height="16" viewBox="0 0 16 16"><path d="M2.500 2.500h13v9h-13zM9 11.500v3M5 14.500h8" fill="none" stroke="#fff"/><path d="M.500.500h4v5h-4z" fill="#04131f" stroke="#fff"/></svg>
        <svg width="16" height="14" viewBox="0 0 16 14"><path d="M1 5h3l3-3.500v11L4 9H1z" fill="none" stroke="#fff"/><path d="M10 4.500a3.500 3.500 0 0 1 0 5M12.500 2.500a7 7 0 0 1 0 9" fill="none" stroke="#fff"/></svg>
        <div class="tray-clock"><span>2:33 AM</span><span>11/14/2024</span></div>
      </div>
      <svg class="tray-note" width="16" height="15" viewBox="0 0 16 15"><path d="M.500.500h15v10.500H11l-3 3-3-3H.500z" fill="none" stroke="#fff"/></svg>
    </div>

    <!-- Overlays -->
    <div class="wm-mark d-flex align-items-center justify-content-between">
      <span class="wm-any">ANY</span>
      <svg width="62" height="58" viewBox="0 0 62 58"><path d="M4 12v34M14 3l42 26-42 26zM22 17l20 12-20 12z" fill="none" stroke="currentColor" stroke-width="4"/></svg>
      <span class="wm-run">RUN</span>
    </div>
    <svg class="xl-cursor" width="17" height="17" viewBox="0 0 17 17"><path d="M5.500 1.500h6v4h4v6h-4v4h-6v-4h-4v-6h4z" fill="#fff" stroke="#000" stroke-width="1.500"/></svg>

    <script src="https://cdn.jsdelivr.net/npm/bootstrap@5.3.3/dist/js/bootstrap.bundle.min.js"></script>
    <script>
      // Filas visibles de la hoja
      const rows = [
        ["5109", "youssouf abdoulbar", "education management", "chef de service de sante scolaire"],
        ["5173", "ben abdillah", "primary/secondary education", "professeur"],
        ["5214", "bourahane omara", "education management", "fongtionnaire"],
        ["5244", "mathilde drault", "primary/secondary education", "professeur des Ãƒ coles"],
        ["5330", "faouzia nourdine", "primary/secondary education", "professeur"],
        ["5400", "djaouhari mbae", "primary/secondary education", "enseignant"],
        ["5573", "mohamed adinane", "primary/secondary education", "teacher of english"],
        ["5675", "ahmed houbabi", "arts and crafts", "teacher"],
        ["6089", "bounouabasse abdallah", "telecommunications", "informaticien"],
        ["6159", "zaitoun comoros", "higher education", "inspection gÃƒ nÃƒ rale"],
      ];
      const body = document.getElementById("sheetBody");
      rows.forEach((r) => {
        body.innerHTML += `<tr><td class="row-num row-hit">${r[0]}</td><td>${r[1]}</td><td>${r[2]}</td><td class="cell-last">${r[3]}</td></tr>`;
      });
      for (let n = 6286; n <= 6294; n++) {
        body.innerHTML += `<tr><td class="row-num">${n}</td><td></td><td></td><td class="cell-last"></td></tr>`;
      }
    </script>
  </body>
</html>
